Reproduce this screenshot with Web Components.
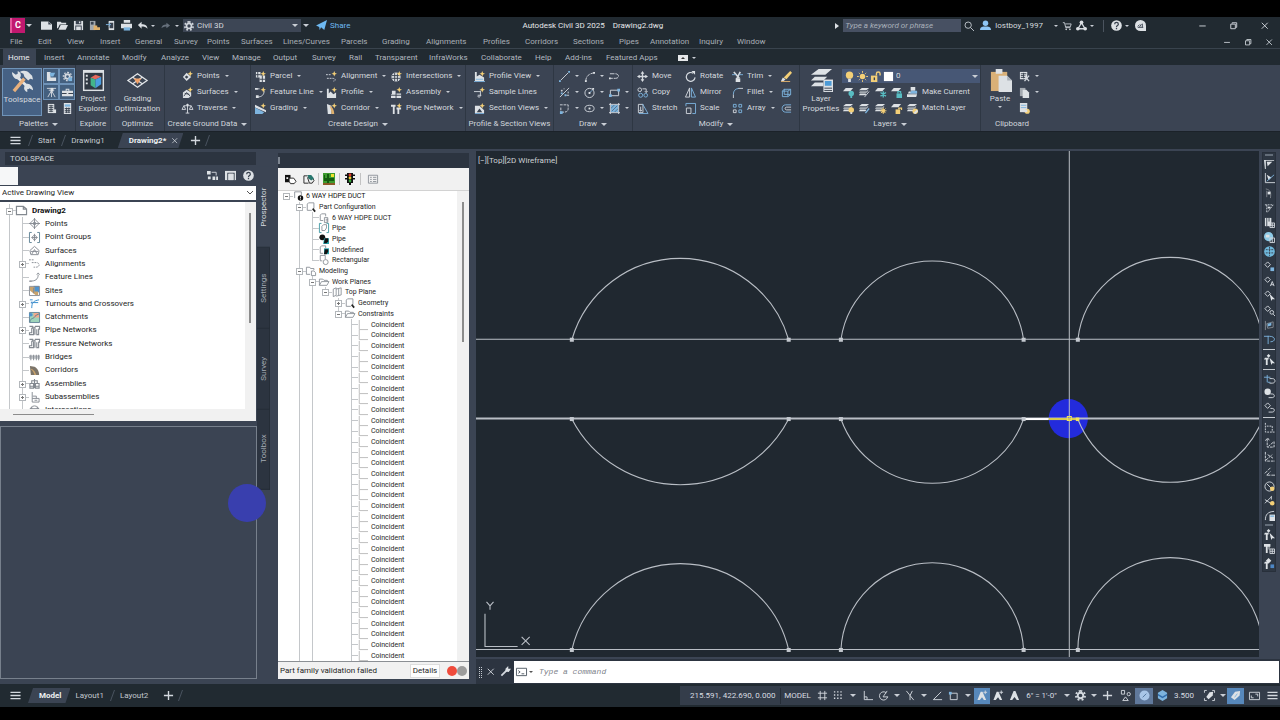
<!DOCTYPE html>
<html lang="en">
<head>
<meta charset="utf-8">
<title>Autodesk Civil 3D 2025 - Drawing2.dwg</title>
<style>
  html, body { margin: 0; height: 100%; background: #000; }
  body { font: 8px/10px Roboto, "Liberation Sans", sans-serif; color: #d5d9de; }
</style>
</head>
<body>
<cad-app></cad-app>
<script>
/* Shared rules that every element's shadow root starts with. */
const BASE = `
  * { box-sizing: border-box; }
  :host { box-sizing: border-box; display: block; }
  button, select, input { font: inherit; color: inherit; background: none; border: 0; padding: 0; margin: 0; border-radius: 0; outline: 0; }
  button { display: flex; align-items: center; justify-content: center; white-space: nowrap; }
  select { appearance: none; }
  a { color: inherit; text-decoration: none; white-space: nowrap; }
  ul { list-style: none; margin: 0; padding: 0; }
  .caret { flex: none; width: 4px; height: 2px; border: 2px solid transparent; border-top-color: #c9ced5; border-bottom: 0; }
  .caret.big { width: 6px; height: 3px; border-width: 3px; border-bottom: 0; }
`;
function define(tag, css, html, setup) {
  customElements.define(tag, class extends HTMLElement {
    constructor() {
      super();
      this.attachShadow({ mode: 'open' });
    }
    connectedCallback() {
      if (this.shadowRoot.childNodes.length) return;
      const body = typeof html === 'function' ? html(this) : html;
      this.shadowRoot.innerHTML = `<style>${BASE}${css}</style>${body}`;
      if (setup) setup(this);
    }
  });
}

/* Icons on a 12-unit grid. Class letters: w white, b blue, y yellow, o orange, t teal, g grey, k dark; s + letter = stroke. */
const star = '<path class="y" d="M9 0l.9 2.1L12 3l-2.1.9L9 6l-.9-2.1L6 3l2.1-.9z"/>';
const sheets = '<path class="w" d="M3 1h8L8 3.500H0z"/><path class="g" d="M1 4.500h7L10 3v1.500L8 6.500H0z"/><path class="w" d="M1 7h6l1 .5-1 1.500H0z"/>';
const tiny = '<path class="w" d="M3 1h8L8 4.500H0z"/>';
const ICONS = {
  new: '<path class="w" d="M0 1.500h8l4 3v6H0z"/><path class="k" d="M8 2v3h3.500z"/>',
  open: '<path class="w" d="M0 2h4l1 1h5v2H3L1 9H0z"/><path class="w" d="M4 5.500h8L9.500 10.500H1.500z"/>',
  save: '<path class="w" d="M1 1h10v10H1z"/><path class="k" d="M3 1h6v3.500H3zM2.500 6h7v5h-7z"/><path class="w" d="M6.500 1.500h1.500v2H6.500zM3.500 7h5v4h-5z"/>',
  saveas: '<path class="g" d="M1 1h6v10H1z"/><path class="k" d="M2 2h3v3H2z"/><path class="o" d="M5 6h4v2h3v3H5z"/>',
  web: '<path class="w" d="M4 1h6v10H4z"/><path class="k" d="M5 3h4v6H5z"/><path class="sb" d="M1 5h5M4 3l2 2-2 2"/>',
  print: '<path class="w" d="M3 0h7v3H3zM0 4h12v5H0z"/><path class="b" d="M3 8h7v3.500H3z"/>',
  undo: '<path class="w" d="M5 2v2.500c4 0 6 1 6.500 5C10 7.500 8 7 5 7v2.500L1 5.500z"/>',
  redo: '<path class="d" d="M7 3v2c-3 0-5 1-5.500 4C3 7.500 5 7 7 7v2l4-3z"/>',
  gear: '<circle class="sw" cx="6" cy="6" r="3" stroke-width="2"/><path class="sw" stroke-width="2" stroke-dasharray="2 2.100" d="M6 1a5 5 0 1 1-.01 0z"/>',
  plane: '<path fill="#6db9f2" d="M0 6L12 0 9 11 5.500 8 4 11 3.500 7.500zM4.500 7.500L9 3 5.500 8z"/>',
  search: '<circle class="sw" cx="5" cy="5" r="3.800"/><path class="sw" d="M8 8l4 4"/>',
  user: '<circle fill="#8ec5f4" cx="6" cy="3.500" r="3"/><path fill="#8ec5f4" d="M0 11c0-4 3-4 6-4s6 0 6 4z"/>',
  cart: '<path class="sw" d="M1 2h2l1.500 6H10M4 3.500h7L10 7H4.500"/><circle class="w" cx="5" cy="10" r="1"/><circle class="w" cx="9.500" cy="10" r="1"/>',
  apps: '<path class="sw" stroke-width="1.500" d="M6 3L2.500 9M6 3l3.500 6M2 9.500h8"/><circle class="w" cx="6" cy="2.500" r="2"/><circle class="w" cx="2" cy="9.500" r="2"/><circle class="w" cx="10" cy="9.500" r="2"/>',
  help: '<circle class="w" cx="6" cy="6" r="5.800"/><path class="sk" stroke-width="1.400" d="M4 4.500c0-2.500 4-2.500 4 0C8 6 6 6 6 7.500M6 8.500V10"/>',
  chat: '<path class="w" d="M6 0a6 6 0 0 1 6 6v6H6A6 6 0 0 1 6 0z"/><path class="sk" d="M3 7l2-2M5 7.500l2-3M8 4v4M3 8h6"/>',
  min: '<path class="sw" d="M2.500 6.500h7"/>',
  max: '<path class="sw" d="M3 4.500h5v5H3zM4.500 4V3H9.500v5H8.500"/>',
  close: '<path class="sw" d="M3 3l6.500 6.500M9.500 3L3 9.500"/>',
  menu: '<path class="sw" stroke-width="1.400" d="M.5 2.500h11M.5 6h11M.5 9.500h11"/>',
  plus: '<path class="sw" stroke-width="1.500" d="M6 1v10M1 6h10"/>',
  p1: '<path class="w" d="M1 1h4v10H1zM5 7h6v4H5z"/><path class="b" d="M4 2h6l-2 4H5z"/>',
  p2: '<circle class="sw" cx="6" cy="6" r="2.500" stroke-width="2"/><path class="sw" stroke-width="1.500" stroke-dasharray="1.700 1.700" d="M6 1.500a4.500 4.500 0 1 1-.01 0z"/><path class="b" d="M7 7h4v4H7z"/>',
  p3: '<path class="sw" d="M2 11L6 4l4 7M6 4v7M1 1.500h10M3 3.500h6"/><path class="w" d="M5 1h3v4H5z"/>',
  p4: '<path class="w" d="M0 4h12v6H0zM4 2h4v2H7V3H5v1H4z"/><path class="k" d="M0 6.500h5v1H0zM7 6.500h5v1H7z"/>',
  p5: '<path class="w" d="M2 1h7v10H2z"/><path class="sk" d="M3 3h5M3 5h5M3 7h5M3 9h5M5.500 2v8"/><path class="w" d="M8 7h3v4H8z"/>',
  p6: '<path class="w" d="M2 0h8v12H2z"/><path class="b" d="M3 1.500h6v2.500H3z"/><path class="sk" d="M3 6h6M3 8h6M3 10h6M5 5v6M7.500 5v6"/>',
  points: '<path class="w" d="M5 2l5 4.500L5 11 1 6.500z"/><path class="k" d="M5 5l2 1.500L5 8.500l-2-2z"/>' + star,
  surfaces: '<path class="w" d="M1 6l4-3 5 3v4l-3 2H1z"/><path class="sk" d="M2 10l3-4 4 4M3 7l5 1"/>' + star,
  traverse: '<path class="sw" d="M6 1v10M2 3h8M4 11h4M0 7l2-4 2 4zM8 7l2-4 2 4z"/><circle class="w" cx="6" cy="2" r="1.300"/>',
  parcel: '<path class="w" d="M1 1h5v4h5v7H5V7H1z"/><path class="sk" d="M1 4h5M3 1v6M8 5v7M5 9h6"/>' + star,
  feature: '<path class="sw" d="M2 2h3M2 11c6 0 8-3 8-7"/><path class="w" d="M0 1h3v2H0zM1 9h3v3H1z"/>' + star,
  grading: '<path class="w" d="M0 2l12 6v2L0 5z"/><path class="b" d="M0 5l10 5-2 2H0z"/>' + star,
  alignment: '<path class="sw" stroke-dasharray="2 1" d="M0 4h5M1 8h6c4 0 4 3 1 3"/>' + star,
  profile: '<path class="w" d="M1 2h2v5l2-2 3 3 3-2v6H1z"/>' + star,
  corridor: '<path class="w" d="M1 1l5 2v9H2z"/><path class="o" d="M4 3c3 1 5 5 5 9H6c0-4-1-6-2-9z"/>' + star,
  inter: '<circle class="w" cx="5.500" cy="6.500" r="5"/><path class="sk" d="M4 2v9M7 2v9M1 5h9M1 8h9"/>' + star,
  assembly: '<path class="w" d="M1 4h4v8H0V8h1zM6 7h5v5H6z"/><path class="sk" d="M0 9h11"/>' + star,
  pipenet: '<path class="w" d="M0 2h5v2H4v8H2V4H0zM6 5h5v2h-2v5H7V7H6z"/>' + star,
  pview: '<path class="w" d="M1 1h2v5l3-2 5 3v4H1z"/><path class="sb" d="M0 11.500h12M2 9h8"/>' + star,
  sample: '<path class="sw" d="M0 5h7M4 9h4M7 4v5c0 3-3 2-3 1"/>' + star,
  sview: '<path class="w" d="M1 3h5l5 5v3H1z"/><path class="k" d="M3 10l3-4 3 4z"/><path class="sb" d="M1 11.500h10"/>' + star,
  line: '<path class="sw" d="M2 10l8-8"/><path class="b" d="M0 10h2v2H0zM10 0h2v2h-2z"/>',
  arc: '<path class="sw" d="M2 11c0-5 3-8 9-9" stroke-dasharray="4 1"/><path class="w" d="M1 10h2v2H1zM10 1h2v2h-2z"/>',
  pline: '<path class="sw" d="M1 3h6c4 0 5 5 0 5H2" stroke-dasharray="5 1"/><path class="w" d="M0 7h2v2H0z"/>',
  spl: '<path class="sw" d="M1 11L11 1M2 4h2M3 3v2M8 9h3M5 2h1M10 5v2"/><path class="b" d="M2 6h2v2H2zM6 8h2v2H6z"/>',
  circle: '<circle class="sw" cx="6" cy="6.500" r="5"/><path class="sb" d="M6 6.500l3-3"/><path class="w" d="M5 5.500h2v2H5zM9 1h2v2H9z"/>',
  rect: '<path class="sw" d="M1.500 3.500h9v6h-9z"/><path class="b" d="M0 8h3v3H0zM9 2h3v3H9z"/>',
  poly: '<path class="sw" stroke-dasharray="3 1" d="M1 2h9v4c0 4-3 4-7 4M2 5v6"/><path class="b" d="M1 9h3v3H1z"/>',
  ellipse: '<ellipse class="sw" cx="6" cy="6" rx="5" ry="3.500"/><path class="w" d="M5 5h2v2H5z"/>',
  hatch: '<path class="b" d="M2 2h8v8H2z"/><path class="sk" stroke-width=".6" d="M2 6l4-4M3 9l6-6M6 10l4-4"/><path class="sw" d="M0 1.500h12M0 10.500h12M1.500 0v12M10.500 0v12"/>',
  move: '<path class="w" d="M6 0l2 3H4zM6 12l2-3H4zM0 6l3-2v4zM12 6L9 4v4z"/><path class="sw" stroke-width="1.400" d="M6 2v8M2 6h8"/>',
  copy: '<circle class="sw" cx="3" cy="3" r="2"/><circle class="sb" cx="4" cy="9" r="2.200"/><circle class="sb" cx="9.500" cy="9" r="2"/><path class="sw" d="M6 2h4v4M8.500 4.500L10 6l1.500-1.500"/>',
  stretch: '<path class="sw" d="M1.500 1.500h5v9h-5z"/><path class="sb" d="M6 1l6 10.500H2"/><path class="sw" d="M4 4v5M2.500 7.500L4 9l1.500-1.500"/>',
  rotate: '<path class="sw" stroke-width="1.300" d="M9 2.500A4.800 4.800 0 1 0 11 7"/><path class="w" d="M7 0h4v4z"/>',
  mirror: '<path class="sw" d="M5 1v10H.5z"/><path class="sb" d="M7 1v10h4.500z"/>',
  scale: '<path class="sw" d="M1.500 5.500h5v6h-5z"/><path class="sb" d="M1 3.500V.5h10.500v11H8"/>',
  trim: '<path class="sw" stroke-width="1.800" d="M2 1l6 7M9 1L5 9"/><path class="w" d="M4 8h5v4H4z"/><path class="sb" d="M0 4h4M8 4h4"/>',
  fillet: '<path class="sw" d="M1.500 12V8"/><path class="sb" d="M1.500 8c0-4 2-6 6-6.500"/><path class="sw" d="M7 1.500h5"/>',
  array: '<path class="sb" d="M1.500 1.500h3v3h-3zM7.500 1.500h3v3h-3zM7.500 7.500h3v3h-3z"/><path class="sw" d="M1.500 7.500h3v3h-3z"/>',
  erase: '<path class="y" d="M10 0l2 2-6 7-3-2z"/><path class="w" d="M2 7l3 2-2 2H0z"/><path class="o" d="M0 11h10v1H0z"/>',
  explode: '<path class="sb" d="M1.500 4.500h6v6h-6zM3.500 2.500h7v6M3.500 2v6h7M1.500 4.500l2-2M7.500 4.500l3-2M7.500 10.500l3-2"/>',
  offset: '<path class="sb" d="M11 2H5c-5 0-5 8 0 8h6"/><path class="sw" d="M11 4.500H6c-2 0-2 3 0 3h5"/>',
  bulb: '<circle class="y" cx="6" cy="4.500" r="4"/><path class="w" d="M4.500 8.500h3V12h-3z"/>',
  sun: '<circle class="y" cx="6" cy="6" r="3"/><path class="sy" d="M6 0v2M6 10v2M0 6h2M10 6h2M2 2l1 1M9 9l1 1M2 10l1-1M9 3l1-1"/>',
  unlock: '<path class="y" d="M1 5h7v7H1z"/><path class="sy" stroke-width="1.500" d="M7 5V3c0-2.500 4-2.500 4 0v2"/><path class="k" d="M4 7h1.500v3H4z"/>',
  white: '<path fill="#fff" d="M1 1h10v10H1z"/>',
  l1: tiny + '<circle class="t" cx="9" cy="7" r="3"/><path class="t" d="M8 9h2v3H8z"/>',
  l2: sheets + '<path class="sw" d="M6 11l5-6"/>',
  l3: tiny + '<path class="st" stroke-width="1.500" d="M9 4.500v7M6 6l6 4M6 10l6-4"/>',
  l4: tiny + '<path class="t" d="M6 7h6v5H6z"/><path class="st" stroke-width="1.300" d="M7.500 7V5h3v2"/>',
  l5: '<path class="w" d="M4 0h5v4H4zM2 5h9v2H1zM0 8h11l-1 3H0z"/><path class="b" d="M5 4h6v3H3z"/>',
  l6: sheets + '<circle class="y" cx="9" cy="7.500" r="3"/><path class="w" d="M8 10h2v2H8z"/>',
  l7: sheets + '<path class="sb" stroke-width="1.500" d="M7 11l4-5"/>',
  l8: sheets + '<circle class="y" cx="9" cy="8.500" r="2"/><path class="sy" d="M9 5v7M5.500 8.500h7M6.500 6l5 5M6.500 11l5-5"/>',
  l9: tiny + '<path class="y" d="M5 7h5v5H5z"/><path class="sy" stroke-width="1.300" d="M8.500 7V5.500h3v2"/>',
  l10: sheets + '<circle class="y" cx="9" cy="9" r="3"/><path class="w" d="M7 11l4-4 1 2-3 3z"/>',
  cut: '<path class="w" d="M1 1h8v8H1z"/><path class="sk" d="M2 3h6M2 5h5M2 7h5M5 2v6"/><path class="sw" stroke-width="1.400" d="M6 5l5 6M11 5l-5 6"/>',
  copyclip: '<path class="g" d="M1 1h6v9H1z"/><path class="w" d="M4 3h4l3 3v6H4z"/>',
  pastespec: '<path class="w" d="M1 0h8v10H1z"/><path class="sb" d="M2 2.500h6M2 5h6"/><circle class="y" cx="9" cy="9" r="2.800"/><path class="w" d="M5 7h4v3H5z"/>',
  tsa: '<path class="w" d="M0 1h4v4H0zM1 7h3v3H1zM6 7h3v4H6zM10 7h2v4h-2z"/><path class="sw" d="M5 2.500h5V6"/>',
  tsb: '<path class="w" d="M0 1h12v10H0z"/><path class="k" d="M2.500 4h1v7h-1zM9.500 4h1v7h-1zM2.500 3h8v1h-8z"/><path class="w" d="M4 4h5v7H4z"/>',
  /* drawing-tree icons, dark on white */
  dwg: '<path class="sg" stroke-width="1.300" d="M.5 1.500h7.500l3.500 3v6H.5zM8 1.500v3h3.500"/>',
  tpoint: '<path class="sg" d="M6 1l5 5-5 5-5-5z"/><path class="sg" d="M6 0v12M0 6h12"/><circle class="sg" cx="6" cy="6" r="1.500"/>',
  tgroup: '<path class="sb2" d="M3 .5H.5v11H3M9 .5h2.500v11H9"/><path class="sg" d="M6 3l3 3-3 3-3-3zM6 2v8M3 6h6"/>',
  tsurf: '<path class="sg" d="M1 6l5-4.500L11 6l-1 4.500H2zM3 10l3-5 3 5M2 7h8"/>',
  talign: '<path class="sg" stroke-dasharray="2 1" d="M0 2h6M3 5h5c4 0 4 5 0 5H5"/>',
  tfeat: '<path class="sg" d="M1 10c6 0 9-2 9-7M8.500 3l1.500-2 1.500 2M0 10h3"/>',
  tsite: '<path class="b2" d="M5 1h6v7H5z"/><path class="o2" d="M1 2h5v5h4v4H7L1 6z"/><path class="sg" d="M.5 1.500h11v10h-11zM5 3v6"/>',
  tturn: '<path fill="none" stroke="#2a86c9" d="M3 11c0-6 2-8 8-9M1 2h3M4 5h6"/><path class="b2" d="M2 4h2v2H2z"/>',
  tcatch: '<path fill="#9ed3ba" d="M1 1h10v10H1z"/><path fill="#f2a98c" d="M5 1h6v5H5z"/><path class="sb2" d="M1 11c0-5 5-3 6-7l4-2M.5.5h11v11H.5z"/><circle class="b2" cx="2" cy="3" r="2"/>',
  tpipe: '<path class="sg" stroke-width="1.200" d="M.5 1.500h3.500v2h-1v5H.5v2h4.500v-7M6.500 10.500v-8h-2M6.500 1.500h5v3h-1v6h-2v-6"/>',
  tbridge: '<path class="sg" d="M0 4.500h12M2 3v6M5 3v6M8 3v6M10.500 3v6M0 6.500h12"/>',
  tcorr: '<path class="g2" d="M1 1l5 1c4 2 5 6 5 9H2z"/><path class="o2" d="M3 4c3 2 4 4 5 7H6C5 8 4 6 2 5z"/>',
  tassem: '<path class="sg" stroke-width="1.200" d="M1 6h4v5H1zM7 6h4v5H7zM3 6V3h6v3M6 1v10M1 9h10"/>',
  tsub: '<path class="sg" d="M3.500 0v11H11V7H3.500M4 4.500h4v2.500M6 9h3"/>',
  tint: '<circle class="sg" cx="6" cy="6" r="5"/><path class="sg" d="M3 2v8M9 2v8M1 4h10M1 8h10"/>',
  /* part-catalog icons */
  parti: '<path class="sg" d="M2 8.500V1h8v4"/><circle class="k2" cx="9" cy="8.500" r="3.300"/><path fill="#fff" d="M8.500 6.500h1v2.500h-1zM8.500 9.500h1v1h-1z"/>',
  partc: '<path class="sg" d="M1.500 10V2.500L3 1h6.500v7M1.500 10H7"/><path class="sk2" stroke-width="2" d="M8 8l3 3.500"/>',
  partt: '<path class="sg" d="M1.500 9V2.500L3 1h5v3M1.500 9H5M6.500 5.500h4v6h-4zM8 7.500h3M8 9.500h3"/>',
  pbox: '<path fill="none" stroke="#2f8f9b" d="M3 .5H.5v11H3M9 .5h2.500v11H9"/><path class="sg" d="M3.500 4l2-2h3.500v4l-2 3H3.500z"/>',
  pblack: '<circle class="k2" cx="4" cy="4" r="3.500"/><path fill="#25a4ae" d="M6 5h6v7H5z"/><path class="k2" d="M7 5h4v4l-2 2H6z"/>',
  pund: '<path class="sg" d="M1.500 10V2.500L3 1h5v3M1.500 10H5"/><path fill="#25a4ae" d="M6 4h6v7H6z"/><path class="k2" d="M7 5h4v3L9 11H6z"/>',
  prect: '<path class="sg" d="M1.500 7V.5h6V5M1.500 7H4"/><circle class="sg" cx="8" cy="8.500" r="3"/>',
  pmodel: '<path class="sg" d="M.5 10V1.500h4l1 1.500h4v2M.5 10H5M6.500 6h3l2 2v3.500h-5z"/>',
  folder: '<path class="sg" d="M.5 10V2.500h4L6 4h4v1.500M.5 10L3 5.500h9L9.500 10z"/>',
  plane2: '<path class="sg" d="M1.500 2.500L5 1v9l-3.500 1.500zM5 2.500L11 1v8.500L5 11M8 2v8"/>',
  coin: '<path fill="none" stroke="#b2b2b2" d="M1.500 0v11.500H12"/>',
  ptA: '<path class="k2" d="M0 1h6v8H0z"/><path fill="#f0f0f0" d="M1.500 3.500h2v2h-2z"/><path class="sk2" d="M4.500 4.500h5L12 8l-2 2.500H6L4.500 8z" fill="#fff"/>',
  ptB: '<path class="sk2" fill="none" d="M1 2h4M1 2v8h5M5 4h5l2 3-2 3H7z"/><path fill="#28776e" d="M5 1h4l3 4-3 2-3-2z"/>',
  ptC: '<path fill="#3d9b2f" d="M0 0h12v12H0z"/><path fill="#145c10" d="M1 5h10v3H1zM4 1h2v11H4zM1 2h1v5H1z"/><path fill="#f1e12e" d="M8 1h3v3H8z"/><path fill="#8a5a28" d="M0 10h12v2H0z"/>',
  ptD: '<path class="k2" d="M3 0h6v10H3zM1 1.500h10v1.500H1zM1 5h10v1.500H1zM5 10h2v2H5z"/><circle cx="6" cy="2" r="1.400" fill="#e2382c"/><circle cx="6" cy="5" r="1.400" fill="#eac92e"/><circle cx="6" cy="8" r="1.400" fill="#37a53b"/>',
  ptE: '<path class="sg" stroke="#555" d="M.5 1.500h11v9.500H.5zM2.500 4h2M2.500 6.500h2M2.500 9h2M6 4h4M6 6.500h4M6 9h4"/>',
  /* command line and status bar */
  wrench: '<path class="sw" stroke-width="2" d="M1.500 10.500L7 5"/><path class="w" d="M6 3l3-3v3h3L9.500 6.500 6 6z"/>',
  prompt: '<path fill="none" stroke="#4d5660" d="M.5 2.500h11v8H.5zM2.500 5l2 1.500-2 1.500M6 8.500h3"/>',
  grid: '<path class="sw" d="M3.500 1v10M8.500 1v10M1 3.500h10M1 8.500h10"/>',
  snap: '<path class="sw" stroke-dasharray="1.500 2" stroke-width="1.500" d="M1 2h10M1 5.500h10M1 9h10"/>',
  ortho: '<path class="sw" d="M2.500 1v9.500H12M2.500 7.500H5.500v3"/>',
  polar: '<path class="sw" d="M9 3a4.500 4.500 0 1 0 1.500 4.500M5.500 7.500L10 1M5.500 7.500H11"/>',
  iso: '<path class="sw" d="M1.500 1l8 10M5.500 6L8 1M5.500 6v5"/>',
  angle: '<path class="sw" d="M10 2L1.500 10.500H11"/>',
  osnap: '<path class="sw" d="M2.500 3.500h7.500v7H2.500z"/><path class="b" d="M1 2h3v3H1z"/>',
  ann: '<path class="w" d="M5 1h2l4 10H8.500L6 7.500 3.500 11H1z"/>',
  ann2: '<path class="w" d="M4 2h2l4 9H7.500L5.500 8 3 11H.5z"/><path class="sw" d="M7 2.500h4M9 .5v4"/>',
  shapes: '<path class="sw" d="M1.500.5h3.500v4H1.500zM6 7.500l3 4H3z"/><circle class="sw" cx="9.500" cy="4.500" r="1.800"/>',
  clean: '<circle fill="#a9c6e8" cx="6" cy="6" r="5.500"/><path fill="none" stroke="#51749e" d="M4 8l4-4"/>',
  hex: '<path class="b" d="M6 0l5 3v6l-5 3-5-3V3z"/><path fill="#326fae" d="M1 4l5 3 5-3v2L6 9 1 6z"/>',
  tag: '<path class="w" d="M10 2L9.500 6 5 10 2.500 7.500 6 2.500z"/><path class="sw" d="M.5 3V.5H3M9 .5h2.500V3M.5 9v2.500H3M9 11.500h2.500V9"/>',
  tag2: '<path class="w" d="M11 1l-.5 5L5 11 1 8l4.500-6z"/><path class="sb" d="M5 8l3-4"/>',
  full: '<path class="sw" d="M.5 2.500h11v8H.5zM7 4.500h2.500V7M2.500 6v2.500H5"/>',
  /* transparent-command toolbar */
  s1: '<path class="w" d="M0 1h11v1H2v9H1zM3 3h6L4 8z"/>',
  s2: '<path class="sw" d="M1.500 0v10.500H12"/><path class="w" d="M3 2l5 3-3 3z"/><path class="sb" d="M3 9l8-7"/>',
  s3: '<path class="sg" d="M2 1c5 1 6 4 5 10M3 3v7"/><path class="w" d="M4 4h3v3H4z"/>',
  s4: '<path class="sw" stroke-dasharray="2 1" d="M1 2h9L4 10M3 2v8"/><path class="w" d="M4 4h3v2H4z"/>',
  s5: '<path class="w" d="M1 1h7v9H1z"/><path class="sk" d="M3 1v9M5.500 1v4"/><path class="sw" d="M6.500 6.500h5v5h-5zM9 6.500v5M6.500 9h5"/>',
  s6: '<circle fill="#8ecbe8" cx="5" cy="5" r="5"/><path class="w" d="M2 3h4v3H2z"/><path class="sw" d="M6.500 6.500h5v5h-5zM9 6.500v5"/>',
  s7: '<circle fill="#6fb8dc" cx="6" cy="6" r="5.800"/><path class="sk" stroke-dasharray="2 1" d="M2 4h8M2 7.500h8M6 1v10"/>',
  s8: '<path class="sw" d="M4 1l3 3-3 3-3-3z"/><path class="b" d="M7 7h4v4H7z"/>',
  s9: '<path class="sw" d="M4 1l3 3-3 3-3-3zM7 11l2-5 2 5M7.500 9.500h3"/>',
  s10: '<path class="sw" d="M4 1l3 3-3 3-3-3z"/><path class="w" d="M6 4l6 6H9l-1 2z"/>',
  s11: '<path class="sw" d="M4 1l3 3-3 3-3-3z"/><circle class="sw" cx="8.500" cy="8" r="2"/><path class="sw" d="M10 10l2 2"/>',
  s12: '<path class="sg" d="M1.500 1v10M3 4l7-2v6L4 9z"/><path class="b" d="M4 4l4-1v3L4 7z"/>',
  s13: '<path class="sb" d="M0 2.500h6c7 0 7 6 1 6M4.500 2v9"/>',
  s14: '<path class="w" d="M1 4h4v2H4v6H2V6H0zM5 0l2 2-2 2-2-2z"/><path class="w" d="M6 4l6 6H9l-1 2z"/>',
  s15: '<path class="sb" d="M0 3.500h7M3.500 1v8M4 9h3"/><path class="sw" d="M6 5h3c4 0 4 5 0 5H6"/>',
  s16: '<circle class="w" cx="4" cy="4" r="3.500"/><path class="sw" d="M7 6.500h2c3 0 3 4 0 4H5"/>',
  s17: '<path class="sw" d="M4 1l3 3-3 3-3-3zM7 7h2c3 0 3 4 0 4H5"/>',
  s18: '<path class="sw" stroke-dasharray="2 1" d="M1.500 1v10H12M3 4.500h6V11"/>',
  s19: '<path class="sw" stroke-dasharray="3 1" d="M1.500 4L4 1l2 3M3.500 2v9H11V5L5 10"/>',
  s20: '<path class="sw" stroke-dasharray="3 1" d="M1.500 1v10H12M2 10l7-6M4 4l6 4"/>',
  s21: '<path class="sw" stroke-dasharray="4 1" d="M1 8l6-6M3 10h9M3 10l4-4"/>',
  s22: '<circle class="sw" cx="6" cy="6" r="5"/><path class="sw" d="M3 3l5 5"/><circle class="y" cx="9" cy="8.500" r="2.500"/>',
  s23: '<path class="sw" d="M1 9l7-7M1 5l8 5M8 1v4"/><circle class="y" cx="9" cy="9" r="2.500"/>',
  s24: '<path class="sw" d="M1.500 11C1.500 5 4 2 11 1.500"/><path class="w" d="M6 5h6v7H6z"/><path class="b" d="M7 6h4v1.500H7z"/>',
  s25: '<path class="w" d="M0 1h7v3H6v3H5V4H4v7H2V4H0z"/><path class="sw" d="M6.500 6.500h5v5h-5zM9 6.500v5M6.500 9h5"/>',
  s26: '<path class="w" d="M1 4h4v2H4v6H2V6H0zM5 0l3 3-3 3-3-3z"/><path fill="#4d86c4" d="M7 7h4v4H7z"/>',
  /* large ribbon pictures on a 24-unit grid */
  Ltools: '<path fill="none" stroke="#e4e7ea" stroke-width="3" d="M5 6l14 13"/><path fill="none" stroke="#e8b07c" stroke-width="3.500" d="M3 22L14 9"/><path class="w" d="M9 2c4-2 8-1 10 1l3 3 1 4-3-1-2 2-4-4-1-3zM1 2l4 3 2-1 0-3c4 2 4 5 2 8-4 2-8-2-8-7zM23 21l-4-2-2 1v3c-4-2-4-5-2-8 4-2 8 2 8 6z"/>',
  Lproj: '<path class="w" d="M1 1h22v22H1z"/><path fill="#303843" d="M2.500 4h19v17.500h-19z"/><path class="w" d="M4 6h2v2H4zM4 10h2v2H4zM4 14h2v2H4z"/><path fill="#e8695c" d="M9 9l5-3 6 2-6 3z"/><path fill="#43b58a" d="M9 9l5 2v9l-5-3z"/><path fill="#4a9de0" d="M14 11l6-3v8l-6 4z"/>',
  Lgrad: '<path fill="none" stroke="#e4e7ea" stroke-width="1.300" d="M12 5l10 7-10 7L2 12zM7 8.500l10 7M17 8.500l-10 7"/><path fill="#f1a269" d="M8 10h8l-4 6z"/>',
  Llayers: '<path class="w" d="M9 0h14l-7 6H1zM5 8h13l-4 4H1l4-4zM5 14h9v4H1z"/><path class="w" d="M14 11h10v13H14z"/><path fill="#4d9bd6" d="M15.500 12.500h7v5h-7z"/><path class="sk" d="M15 20h8M15 22.500h8"/>',
  Lpaste: '<path fill="#d9b077" d="M2 3h17v20H2z"/><path class="w" d="M7 0h7v5H7zM10 7h9l5 5v12H10z"/><path fill="#aab0b7" d="M19 7v5h5z"/>'
};
customElements.define('cad-icon', class extends HTMLElement {
  connectedCallback() {
    if (this.shadowRoot) return;
    const name = this.getAttribute('name');
    const size = this.getAttribute('size') || 12;
    const unit = name[0] === 'L' ? 24 : 12;
    this.attachShadow({ mode: 'open' }).innerHTML = `<style>
      :host { display: block; flex: none; width: ${size}px; height: ${size}px; }
      svg { display: block; width: 100%; height: 100%; overflow: visible; }
      .w { fill: #dde1e5; } .b { fill: #7db4de; } .y { fill: #f3cf77; } .o { fill: #dfb06c; } .t { fill: #58bcc2; } .g { fill: #a3a9b0; } .k { fill: #39424f; } .d { fill: #66707c; }
      .sw { fill: none; stroke: #d3d8de; } .sb { fill: none; stroke: #7db4de; } .sy { fill: none; stroke: #f3cf77; } .st { fill: none; stroke: #58bcc2; } .sk { fill: none; stroke: #39424f; }
      .sg { fill: none; stroke: #838990; } .sb2 { fill: none; stroke: #5b8093; } .b2 { fill: #4e93cf; } .o2 { fill: #c9a36c; } .g2 { fill: #7c7468; } .k2 { fill: #111; } .sk2 { stroke: #222; }
    </style><svg viewBox="0 0 ${unit} ${unit}" aria-hidden="true">${ICONS[name] || ''}</svg>`;
  }
});
const icon = (name, size = 12) => `<cad-icon name="${name}" size="${size}"></cad-icon>`;
const iconButton = (name, size = 12, cls = '') => `<button class="${cls}" type="button" aria-label="${name}">${icon(name, size)}</button>`;

/* ---------- title bar ---------- */
define('title-bar', `
  :host { display: flex; align-items: center; height: 17px; padding: 0 8px; background: #212a31; color: #d5d9de; }
  .group { display: flex; align-items: center; flex: none; }
  .group > button { width: 16px; height: 15px; }
  .group > button.narrow { width: 6px; }
  .group > button.logo { width: 18px; font: bold 9px/15px Roboto, sans-serif; }
  .logo span { width: 15px; height: 15px; background: #c2186f; color: #fff; border-left: 2px solid #e4579c; }
  .gap { width: 6px; }
  .space { display: flex; align-items: center; width: 118px; height: 13px; margin: 0 2px 0 3px; padding: 0 3px 0 1px; background: #3d4655; }
  .space select { flex: 1; padding-left: 3px; }
  h1 { flex: 1; margin: 0; font: inherit; text-align: center; white-space: pre; color: #e6e8ea; }
  .share { display: flex; align-items: center; gap: 3px; margin-left: 7px; color: #6db9f2; }
  .find { width: 118px; height: 13px; padding: 0 2px; margin: 0 0 0 4px; background: #475062; font-style: italic; }
  .find::placeholder { color: #a9b0ba; opacity: 1; }
  .name { margin: 0 11px 0 2px; }
  .rule { width: 1px; height: 12px; margin: 0 4px 0 6px; background: #4b545f; }
  .win { gap: 15px; margin-left: 44px; }
`, `
  <div class="group">
    <button class="logo" type="button" aria-label="Application menu"><span>C</span></button>
    <button class="narrow" type="button" aria-label="More"><span class="caret big"></span></button><span class="gap"></span>
    ${['new', 'open', 'save', 'saveas', 'web', 'print', 'undo'].map(n => iconButton(n, 11)).join('')}
    <button class="narrow" type="button" aria-label="Undo list"><span class="caret"></span></button>
    <button type="button" aria-label="redo" style="width:18px">${icon('redo', 11)}</button>
    <button class="narrow" type="button" aria-label="Redo list"><span class="caret"></span></button>
    <label class="space">${icon('gear', 10)}<select aria-label="Workspace"><option>Civil 3D</option></select><span class="caret big"></span></label>
    <button class="narrow" type="button" aria-label="Customize"><span class="caret big"></span></button>
    <a class="share" href="#share">${icon('plane', 11)}Share</a>
  </div>
  <h1>Autodesk Civil 3D 2025    Drawing2.dwg</h1>
  <div class="group">
    <svg width="4" height="6" viewBox="0 0 4 6" aria-hidden="true"><path d="M0 0l4 3-4 3z" fill="#dde1e5"/></svg>
    <input class="find" type="text" placeholder="Type a keyword or phrase" aria-label="Search">
    ${iconButton('search', 10)}${iconButton('user', 11)}
    <span class="name">lostboy_1997</span>
    <span class="caret"></span>
    <button type="button" aria-label="Store" style="width:18px">${icon('cart', 10)}</button>
    <button type="button" aria-label="Apps" style="width:10px">${icon('apps', 11)}</button>
    <button type="button" aria-label="Apps list" style="width:11px"><span class="caret"></span></button>
    <span class="rule"></span>
    ${iconButton('help', 11)}
    <button class="narrow" type="button" aria-label="Help list"><span class="caret"></span></button>
    <button type="button" aria-label="Chat" style="width:20px">${icon('chat', 11)}</button>
  </div>
  <div class="group win">${iconButton('min', 11)}${iconButton('max', 11)}${iconButton('close', 11)}</div>
`);

/* ---------- menu bar ---------- */
define('menu-bar', `
  :host { display: flex; align-items: center; height: 15px; padding: 2px 3px 0 10px; background: #212a31; border-bottom: 1px solid #39434d; color: #a9afb7; }
  nav { flex: 1; display: grid; grid-template-columns: 28px 29px 33px 35px 39px 33px 34px 42px 58px 41px 44px 57px 42px 48px 46px 31px 49px 38px 40px; }
  .win { display: flex; gap: 5px; }
  .win button { width: 16px; }
`, `
  <nav>${'File Edit View Insert General Survey Points Surfaces Lines/Curves Parcels Grading Alignments Profiles Corridors Sections Pipes Annotation Inquiry Window'.split(' ').map(t => `<a href="#${t}">${t}</a>`).join('')}</nav>
  <div class="win">${iconButton('min', 10)}${iconButton('max', 10)}${iconButton('close', 10)}</div>
`);

/* ---------- ribbon tabs ---------- */
define('ribbon-tabs', `
  :host { display: flex; height: 16px; padding-left: 3px; background: #212a31; color: #b3b9c0; }
  nav { display: grid; grid-template-columns: 36px 33px 45px 39px 41px 30px 41px 39px 37px 26px 54px 52px 54px 30px 41px 77px; }
  a { display: flex; align-items: center; height: 16px; padding: 2px 0 0 5px; }
  a[aria-current] { width: 33px; background: #3b4453; color: #eceef0; }
  button { gap: 4px; padding-top: 2px; }
`, `
  <nav>${['Home', 'Insert', 'Annotate', 'Modify', 'Analyze', 'View', 'Manage', 'Output', 'Survey', 'Rail', 'Transparent', 'InfraWorks', 'Collaborate', 'Help', 'Add-ins', 'Featured Apps'].map((t, i) => `<a href="#${i}"${i ? '' : ' aria-current="page"'}>${t}</a>`).join('')}</nav>
  <button type="button" aria-label="Minimize ribbon"><svg width="10" height="6" viewBox="0 0 10 6"><path d="M0 0h10v6H0z" fill="#e6e8ea"/><path d="M3 4l2-2 2 2z" fill="#333"/></svg><span class="caret"></span></button>
`);

/* ---------- ribbon parts ---------- */
define('ribbon-panel', `
  :host { display: flex; flex-direction: column; height: 66px; padding-top: 3px; border-right: 1px solid #2e3743; }
  .tools { height: 48px; display: flex; }
  .title { flex: 1; display: flex; align-items: center; justify-content: center; gap: 4px; padding-top: 1px; white-space: nowrap; color: #d0d5db; }
`, el => `<div class="tools"><slot></slot></div><div class="title">${el.getAttribute('label')}${el.hasAttribute('more') ? '<span class="caret big"></span>' : ''}</div>`);

define('tool-button', `
  :host { height: 16px; }
  button { height: 16px; gap: 4px; justify-content: flex-start; width: 100%; }
  .caret { margin-left: 1px; }
`, el => `<button type="button" aria-label="${el.textContent.trim() || el.getAttribute('icon')}">${icon(el.getAttribute('icon'), 11)}<slot></slot>${el.hasAttribute('caret') ? '<span class="caret"></span>' : ''}</button>`);

define('big-button', `
  :host { flex: 1; }
  button { width: 100%; height: 48px; flex-direction: column; justify-content: flex-start; padding-top: 1px; }
  .label { display: block; white-space: normal; text-align: center; margin-top: 2px; }
  .caret { margin-top: 2px; }
`, el => `<button type="button">${icon(el.getAttribute('icon'), 23)}<span class="label"><slot></slot></span>${el.hasAttribute('caret') ? '<span class="caret"></span>' : ''}</button>`);

const tb = (i, t, c = 1) => `<tool-button icon="${i}"${c ? ' caret' : ''}>${t}</tool-button>`;
define('ribbon-bar', `
  :host { display: flex; height: 66px; padding-left: 2px; background: #3b4453; color: #d5d9de; }
  ribbon-panel { flex: none; }
  ribbon-panel:last-child { border-right: 0; }
  .col { display: grid; grid-template-rows: repeat(3, 16px); }
  .cols { display: grid; grid-auto-flow: column; grid-template-rows: repeat(3, 16px); width: 100%; }
  .on { background: #466184; border: 1px solid #6f93b8; flex: none; width: 40px; }
  .six { display: grid; grid-template: repeat(3, 16px) / 16px 16px; margin-left: 1px; }
  .six button { height: 16px; border: 1px solid transparent; }
  .six button.lit { background: #44607f; border-color: #6f93b8; }
  .layers { display: grid; grid-template-rows: repeat(3, 16px); }
  .layers label { display: flex; align-items: center; gap: 2px; height: 14px; margin-top: 1px; padding: 0 2px; background: #475775; }
  .layers select { flex: 1; }
  .row { display: flex; align-items: center; padding-left: 1px; }
  .row button { width: 16px; height: 16px; justify-content: flex-start; }
  .row tool-button { flex: 1; }
`, `
  <ribbon-panel label="Palettes" more style="width:74px">
    <big-button class="on" icon="Ltools">Toolspace</big-button>
    <div class="six">${['p1', 'p2', 'p3', 'p4', 'p5', 'p6'].map((n, i) => iconButton(n, 11, i < 4 ? 'lit' : '')).join('')}</div>
  </ribbon-panel>
  <ribbon-panel label="Explore" style="width:35px"><big-button icon="Lproj">Project Explorer</big-button></ribbon-panel>
  <ribbon-panel label="Optimize" style="width:54px"><big-button icon="Lgrad">Grading Optimization</big-button></ribbon-panel>
  <ribbon-panel label="Create Ground Data" more style="width:86px"><div class="col" style="padding-left:17px">${tb('points', 'Points')}${tb('surfaces', 'Surfaces')}${tb('traverse', 'Traverse')}</div></ribbon-panel>
  <ribbon-panel label="Create Design" more style="width:215px"><div class="cols" style="padding-left:4px;grid-template-columns:71px 65px 1fr">${tb('parcel', 'Parcel')}${tb('feature', 'Feature Line')}${tb('grading', 'Grading')}${tb('alignment', 'Alignment')}${tb('profile', 'Profile')}${tb('corridor', 'Corridor')}${tb('inter', 'Intersections')}${tb('assembly', 'Assembly')}${tb('pipenet', 'Pipe Network')}</div></ribbon-panel>
  <ribbon-panel label="Profile &amp; Section Views" style="width:88px"><div class="col" style="padding-left:8px">${tb('pview', 'Profile View')}${tb('sample', 'Sample Lines', 0)}${tb('sview', 'Section Views')}</div></ribbon-panel>
  <ribbon-panel label="Draw" more style="width:79px"><div class="cols" style="padding-left:5px;grid-template-columns:25px 25px 1fr">${tb('line', '')}${tb('spl', '')}${tb('poly', '')}${tb('arc', '')}${tb('circle', '')}${tb('ellipse', '')}${tb('pline', '', 0)}${tb('rect', '')}${tb('hatch', '')}</div></ribbon-panel>
  <ribbon-panel label="Modify" more style="width:167px"><div class="cols" style="padding-left:4px;grid-template-columns:48px 47px 49px 1fr">${tb('move', 'Move', 0)}${tb('copy', 'Copy', 0)}${tb('stretch', 'Stretch', 0)}${tb('rotate', 'Rotate', 0)}${tb('mirror', 'Mirror', 0)}${tb('scale', 'Scale', 0)}${tb('trim', 'Trim')}${tb('fillet', 'Fillet')}${tb('array', 'Array')}${tb('erase', '', 0)}${tb('explode', '', 0)}${tb('offset', '', 0)}</div></ribbon-panel>
  <ribbon-panel label="Layers" more style="width:181px">
    <big-button icon="Llayers" style="flex:none;width:42px">Layer Properties</big-button>
    <div class="layers" style="width:138px">
      <label>${icon('bulb', 11)}${icon('sun', 11)}${icon('unlock', 11)}${icon('white', 11)}<select aria-label="Layer"><option>0</option></select><span class="caret big"></span></label>
      <div class="row">${['l1', 'l2', 'l3', 'l4'].map(n => iconButton(n, 11)).join('')}${tb('l5', 'Make Current', 0)}</div>
      <div class="row">${['l6', 'l7', 'l8', 'l9'].map(n => iconButton(n, 11)).join('')}${tb('l10', 'Match Layer', 0)}</div>
    </div>
  </ribbon-panel>
  <ribbon-panel label="Clipboard" style="width:62px">
    <big-button icon="Lpaste" caret style="flex:none;width:38px">Paste</big-button>
    <div class="col">${tb('cut', '')}${tb('copyclip', '')}${tb('pastespec', '', 0)}</div>
  </ribbon-panel>
`);

/* ---------- file and layout tabs ---------- */
define('tab-strip', `
  :host { display: flex; align-items: center; background: #212a31; color: #c3c8ce; }
  button, a { flex: none; }
  .menu { width: 28px; padding-left: 2px; }
  :host([closable]) .menu { width: 30px; padding-left: 0; }
  a { display: flex; align-items: center; height: 15px; padding-right: 8px; }
  a::before { content: ""; width: 1px; height: 11px; margin-right: 7px; background: #4a5460; transform: skewX(-20deg); }
  a[aria-current] { padding: 0 9px 0 11px; font-weight: bold; color: #eef0f2; background: #3b4453; clip-path: polygon(5px 0, 100% 0, calc(100% - 5px) 100%, 0 100%); }
  :host([closable]) a[aria-current] { margin-left: 5px; padding-right: 4px; }
  a[aria-current]::before { display: none; }
  a[aria-current] + a::before { background: none; margin-right: 4px; }
  .close { margin-left: 4px; }
  .add { width: 24px; }
`, el => {
  const tabs = el.getAttribute('tabs').split(',');
  const on = el.getAttribute('active');
  return `<button class="menu" type="button" aria-label="Menu">${icon('menu', 11)}</button>` +
    tabs.map(t => t === on ? `<a href="#tab" aria-current="page">${t}${el.hasAttribute('closable') ? `<cad-icon class="close" name="close" size="9"></cad-icon>` : ''}</a>` : `<a href="#tab">${t}</a>`).join('') +
    `<button class="add" type="button" aria-label="New tab">${icon('plus', 11)}</button><a href="#end" aria-hidden="true"></a>`;
});

/* ---------- trees ---------- */
define('tree-list', `
  :host { overflow: hidden; color: #1e1e1e; }
  ul { display: grid; grid-auto-rows: minmax(0, 1fr); height: var(--rows-height); padding-left: var(--tree-pad, 3px); }
  li { display: flex; align-items: center; min-height: 0; white-space: nowrap; }
  i { flex: none; position: relative; width: 13px; height: 100%; }
  i.v { background: linear-gradient(#c4c7ca, #c4c7ca) 6px 0 / 1px 100% no-repeat; }
  i.h { background: linear-gradient(#c4c7ca, #c4c7ca) 6px 0 / 1px 100% no-repeat, linear-gradient(#c4c7ca, #c4c7ca) 6px 50% / 7px 1px no-repeat; }
  i.h.end { background-size: 1px 50%, 7px 1px; }
  i.h.only { background: linear-gradient(#c4c7ca, #c4c7ca) 6px 50% / 7px 1px no-repeat; }
  i b { position: absolute; left: 4px; top: calc(50% - 2px); width: 5px; height: 5px; outline: 1px solid #b3b7bb; background: linear-gradient(#777, #777) 1px 2px / 3px 1px no-repeat #fff; }
  i b.p { background: linear-gradient(#777, #777) 1px 2px / 3px 1px no-repeat, linear-gradient(#777, #777) 2px 1px / 1px 3px no-repeat #fff; }
  cad-icon { margin-right: var(--icon-gap, 5px); }
  .root { font-weight: var(--root-weight, normal); color: #111; }
`, '<ul role="tree"></ul>', el => {
  /* rows: [guides, expander, icon, text]; guides use | for a line, . for blank; expander: + or -, followed by e for the last child, o for a lone root */
  el.render = rows => {
    el.shadowRoot.querySelector('ul').innerHTML = rows.map(([g, x, ic, t], n) =>
      `<li role="treeitem">${[...g].map(c => `<i class="${c === '|' ? 'v' : ''}"></i>`).join('')}<i class="h ${x.includes('e') ? 'end' : ''} ${x.includes('o') ? 'only' : ''}">${/[+-]/.test(x) ? `<b class="${x.includes('+') ? 'p' : ''}"></b>` : ''}</i>${icon(ic, el.getAttribute('icon-size') || 11)}<span class="${n ? '' : 'root'}">${t}</span></li>`).join('');
  };
});

/* ---------- Toolspace palette ---------- */
define('tool-space', `
  :host { display: flex; flex: none; width: 270px; padding: 3px 0 5px; }
  .main { width: 257px; display: flex; flex-direction: column; }
  h2 { margin: 0; height: 13px; width: 256px; padding-left: 5px; font: inherit; line-height: 13px; background: #2c3440; border-left: 5px solid #3b4453; color: #d0d4d9; }
  .bar { height: 21px; width: 256px; display: flex; align-items: center; justify-content: flex-end; gap: 2px; }
  .bar .blank { width: 18px; height: 18px; background: #f6f7f8; margin-right: auto; }
  .bar button { width: 16px; }
  .view { display: flex; align-items: center; width: 256px; height: 14px; background: #fff; color: #1e1e1e; margin-bottom: 2px; padding: 0 3px 0 2px; }
  .view select { flex: 1; }
  .tree { display: grid; grid-template: 207px 12px / 1fr 11px; width: 256px; height: 219px; background: #fff; }
  tree-list { --rows-height: 213px; --root-weight: bold; --tree-pad: 3px; padding-top: 2px; }
  .vs { background: #f1f1f1; padding: 11px 4px; }
  .vs::before, .hs::before { content: ""; display: block; background: #8c8c8c; }
  .vs::before { width: 2px; height: 110px; }
  .hs { grid-column: 1 / 3; background: #f1f1f1; padding: 5px 13px; }
  .hs::before { width: 81px; height: 1px; }
  .detail { flex: 1; margin-top: 5px; border: 1px solid #77808c; position: relative; }
  .halo { position: absolute; right: -10px; top: 57px; width: 38px; height: 38px; border-radius: 50%; background: #393fae; z-index: 2; }
  .tabs { margin-top: 15px; width: 13px; height: 323px; display: grid; grid-template-rows: repeat(4, 1fr); background: #2c3440; border-right: 1px solid #252d37; }
  .tabs button { writing-mode: vertical-rl; transform: rotate(180deg); width: 13px; color: #a4abb4; border-top: 1px solid #252d37; }
  .tabs button[aria-selected="true"] { background: #3b4453; color: #d5d9de; }
`, `
  <section class="main">
    <h2>TOOLSPACE</h2>
    <div class="bar"><span class="blank"></span>${iconButton('tsa', 11)}${iconButton('tsb', 11)}${iconButton('help', 11)}</div>
    <label class="view"><select aria-label="Drawing view"><option>Active Drawing View</option></select><svg width="6" height="4" viewBox="0 0 6 4"><path d="M0 0l3 3 3-3" fill="none" stroke="#555"/></svg></label>
    <div class="tree"><tree-list></tree-list><div class="vs"></div><div class="hs"></div></div>
    <div class="detail"><div class="halo"></div></div>
  </section>
  <div class="tabs" role="tablist"><button role="tab" aria-selected="true">Prospector</button><button role="tab">Settings</button><button role="tab">Survey</button><button role="tab">Toolbox</button></div>
`, el => el.shadowRoot.querySelector('tree-list').render([
  ['', '-', 'dwg', 'Drawing2'],
  ['|', '', 'tpoint', 'Points'],
  ['|', '', 'tgroup', 'Point Groups'],
  ['|', '', 'tsurf', 'Surfaces'],
  ['|', '+', 'talign', 'Alignments'],
  ['|', '', 'tfeat', 'Feature Lines'],
  ['|', '', 'tsite', 'Sites'],
  ['|', '+', 'tturn', 'Turnouts and Crossovers'],
  ['|', '', 'tcatch', 'Catchments'],
  ['|', '+', 'tpipe', 'Pipe Networks'],
  ['|', '', 'tpipe', 'Pressure Networks'],
  ['|', '', 'tbridge', 'Bridges'],
  ['|', '', 'tcorr', 'Corridors'],
  ['|', '+', 'tassem', 'Assemblies'],
  ['|', '+', 'tsub', 'Subassemblies'],
  ['|', '', 'tint', 'Intersections']
]));

/* ---------- part builder palette ---------- */
define('part-palette', `
  :host { display: flex; flex-direction: column; flex: none; width: 191px; margin: 0 7px 0 8px; padding: 4px 0 5px; color: #1e1e1e; }
  .grip { display: flex; align-items: center; height: 15px; background: #2c3440; }
  .grip::before { content: ""; width: 2px; height: 7px; background: #7d8590; }
  .bar { display: flex; align-items: center; height: 23px; padding-left: 3px; background: #f1f1f1; border-bottom: 1px solid #d2d2d2; }
  .bar button { width: 18px; }
  .bar hr { width: 1px; height: 12px; margin: 0 1px; border: 0; background: #c3c3c3; }
  .tree { flex: 1; min-height: 0; overflow: hidden; display: grid; grid-template-columns: 1fr 12px; background: #fff; font-size: 7px; line-height: 8px; }
  tree-list { --tree-pad: 2px; --icon-gap: 3px; --rows-height: 470px; }
  .vs { background: #f1f1f1; padding: 11px 5px; }
  .vs::before { content: ""; display: block; width: 2px; height: 140px; background: #8c8c8c; }
  .foot { display: flex; align-items: center; height: 18px; padding: 0 2px; background: #f1f1f1; border-top: 1px solid #8b8f94; }
  .foot span { flex: 1; }
  .foot button { width: 30px; height: 14px; margin-right: 7px; background: #fdfdfd; border: 1px solid #ddd; }
  .dot { flex: none; width: 10px; height: 10px; border-radius: 50%; background: #9c9c9c; }
  .dot.bad { background: #ef4b3c; }
`, `
  <div class="grip"></div>
  <div class="bar">${iconButton('ptA', 11)}${iconButton('ptB', 11)}<hr>${iconButton('ptC')}<hr>${iconButton('ptD')}<hr><button type="button" aria-label="Options" style="width:22px">${icon('ptE', 10)}</button></div>
  <div class="tree"><tree-list icon-size="10"></tree-list><div class="vs"></div></div>
  <div class="foot"><span>Part family validation failed</span><button type="button">Details</button><div class="dot bad"></div><div class="dot"></div></div>
`, el => el.shadowRoot.querySelector('tree-list').render([
  ['', '-o', 'parti', '6 WAY HDPE DUCT'],
  ['.', '-', 'partc', 'Part Configuration'],
  ['.|', '', 'partt', '6 WAY HDPE DUCT'],
  ['.|', '', 'pbox', 'Pipe'],
  ['.|', '', 'pblack', 'Pipe'],
  ['.|', '', 'pund', 'Undefined'],
  ['.|', 'e', 'prect', 'Rectangular'],
  ['.', '-', 'pmodel', 'Modeling'],
  ['.|', '-', 'folder', 'Work Planes'],
  ['.||', '-e', 'plane2', 'Top Plane'],
  ['.||.', '+', 'partc', 'Geometry'],
  ['.||.', '-e', 'folder', 'Constraints'],
  ...Array.from({ length: 32 }, () => ['.||..', '', 'coin', 'Coincident'])
]));

/* ---------- model space ---------- */
const arc = (x1, x2, y, r, up) => `<path d="M${x1} ${y}A${r} ${r} 0 0 ${up ? 1 : 0} ${x2} ${y}"/>`;
const nodes = [[573, 339], [789, 339], [841, 339], [1023, 339], [1077, 339], [573, 418], [789, 418], [841, 418], [1023, 418], [573, 648], [789, 648], [841, 648], [1023, 648], [1077, 648]];
define('model-view', `
  :host { position: relative; flex: 1; background: #202830; overflow: hidden; }
  svg { position: absolute; inset: 0; width: 100%; height: 100%; }
  p { position: relative; margin: 5px 2px; color: #cdd1d6; }
`, `
  <svg viewBox="476 151 783 504" preserveAspectRatio="xMidYMid slice" aria-label="Drawing">
    <circle cx="1067.500" cy="417.500" r="19.500" fill="#232bdc"/>
    <g fill="none" stroke="#b9bec5" stroke-width="1.100">
      <path d="M400 338.500H1300M400 647.500H1300" stroke-width="1"/><path d="M1068.500 100V700" stroke-width="1"/>
      <path d="M400 417.500H1300" stroke-width="2"/>
      ${arc(573, 789, 339, 112.5, 1)}${arc(841, 1023, 339, 92, 1)}${arc(1077, 1261, 339, 92.6, 1)}
      ${arc(573, 789, 418, 121.8, 0)}${arc(841, 1023, 418, 96.7, 0)}${arc(1077, 1261, 418, 98.7, 0)}
      ${arc(573, 789, 648, 110.8, 1)}${arc(841, 1023, 648, 91.1, 1)}${arc(1077, 1261, 648, 92, 1)}
      <path d="M486.500 612V644.500H519"/>
      <path d="M488 600l3.500 4 3.500-4M491.500 604v4M523 635l8 8M531 635l-8 8"/>
    </g>
    <path d="M1023 418h25" stroke="#fff" stroke-width="2"/><path d="M1048 418h30" stroke="#d9cb4c" stroke-width="2"/>
    <path d="M1066.500 415.500h4v4h-4z" fill="none" stroke="#f1e35a"/><path d="M1075 416.500h3.500v3.500H1075z" fill="#f1e35a"/>
    ${nodes.map(([x, y]) => `<rect x="${x - 2}" y="${y - 2}" width="4" height="4" fill="#c3c8ce"/>`).join('')}
  </svg>
  <p>[−][Top][2D Wireframe]</p>
`);

define('side-toolbar', `
  :host { flex: none; width: 21px; padding: 1px 4px 0 3px; }
  .bar { background: #2e3743; border: 1px solid #28303b; }
  .set { display: grid; grid-auto-rows: 1fr; }
  .set button { width: 12px; }
  hr { width: 12px; height: 1px; margin: 2px 0; border: 0; background: #c4c9cf; }
  hr.grip { width: 8px; height: 2px; margin: 1px 2px 1px; background: #636d79; }
`, (() => {
  const range = (a, b) => Array.from({ length: b - a + 1 }, (_, i) => 's' + (a + i));
  const set = (names, h) => `<div class="set" style="height:${h}px">${names.map(n => iconButton(n, 11)).join('')}</div>`;
  return `<div class="bar"><hr class="grip">${set(range(1, 13), 190)}<hr>${set(['s14'], 15)}<hr>${set(range(15, 17), 43)}<hr>${set(range(18, 24), 103)}<hr class="grip">${set(['s14', 's25', 's26'], 44)}</div>`;
})());

define('command-line', `
  :host { display: flex; align-items: center; height: 25px; margin-top: 2px; background: #2c3440; }
  .grip { width: 4px; height: 12px; margin: 0 0 0 3px; background: repeating-linear-gradient(#2c3440 0 1px, transparent 1px 2px), repeating-linear-gradient(90deg, #c4c9cf 0 1px, transparent 1px 2px); }
  button { width: 15px; }
  label { flex: 1; display: flex; align-items: center; gap: 2px; height: 22px; margin: 0 1px 0 1px; padding-left: 2px; background: #fff; }
  input { flex: 1; margin-left: 4px; font: italic 8px/10px "Liberation Mono", monospace; color: #333; }
  input::placeholder { color: #80858b; opacity: 1; }
  .caret { border-top-color: #555; }
`, `<span class="grip"></span>${iconButton('close', 11)}${iconButton('wrench', 11)}<label>${icon('prompt', 11)}<span class="caret"></span><input type="text" placeholder="Type a command" aria-label="Command"></label>`);

/* ---------- status bar ---------- */
const cells = [['grid', 16], ['snap', 16], ['^', 13], ['ortho', 16], ['polar', 16], ['^', 11], ['iso', 16], ['^', 11], ['angle', 16], ['osnap', 16], ['^', 13], ['ann2', 16, 1], ['ann2', 16], ['ann', 16]];
const cells2 = [['^', 11], ['gear', 17], ['^', 10], ['plus', 17], ['shapes', 19], ['clean', 18, 2], ['hex', 18]];
const cells3 = [['tag', 20], ['^', 8], ['tag2', 17, 1], ['full', 20], ['menu', 16]];
const cell = ([n, w, lit]) => `<button type="button" aria-label="${n === '^' ? 'list' : n}" class="${lit === 1 ? 'lit' : lit === 2 ? 'lit dim' : ''}" style="width:${w}px">${n === '^' ? '<span class="caret big"></span>' : icon(n, 11)}</button>`;
define('status-bar', `
  :host { display: flex; align-items: center; height: 23px; background: #212a31; }
  tab-strip { flex: 1; }
  .tools { display: flex; align-items: center; height: 19px; background: #343d4a; white-space: nowrap; color: #d8dce0; }
  .tools button { height: 16px; }
  .lit { background: #5788bb; }
  .lit.dim { background: #60799c; }
  .xyz { width: 100px; padding-left: 10px; }
  .model { width: 34px; border-left: 1px solid #252d37; }
  .scale { width: 39px; }
  .lod { width: 28px; padding-left: 3px; }
`, `
  <tab-strip tabs="Model,Layout1,Layout2" active="Model"></tab-strip>
  <div class="tools">
    <span class="xyz">215.591, 422.690, 0.000</span><button class="model" type="button">MODEL</button>
    ${cells.map(cell).join('')}<button class="scale" type="button">6" = 1'-0"</button>${cells2.map(cell).join('')}<span class="lod">3.500</span>${cells3.map(cell).join('')}
  </div>
`);

/* ---------- application shell ---------- */
define('cad-app', `
  :host { display: flex; flex-direction: column; min-height: 100vh; padding: 17px 0 14px; background: #000; }
  .files { height: 18px; border-top: 1px solid #1b2229; }
  main { flex: 1; display: flex; min-height: 0; background: #3b4453; }
  .work { flex: 1; min-width: 0; display: flex; flex-direction: column; padding-top: 2px; }
  .view { flex: 1; display: flex; min-height: 0; }
`, `
  <title-bar></title-bar>
  <menu-bar></menu-bar>
  <ribbon-tabs></ribbon-tabs>
  <ribbon-bar></ribbon-bar>
  <tab-strip class="files" tabs="Start,Drawing1,Drawing2*" active="Drawing2*" closable></tab-strip>
  <main>
    <tool-space></tool-space>
    <part-palette></part-palette>
    <div class="work"><div class="view"><model-view></model-view><side-toolbar></side-toolbar></div><command-line></command-line></div>
  </main>
  <status-bar></status-bar>
`);
</script>
</body>
</html>
